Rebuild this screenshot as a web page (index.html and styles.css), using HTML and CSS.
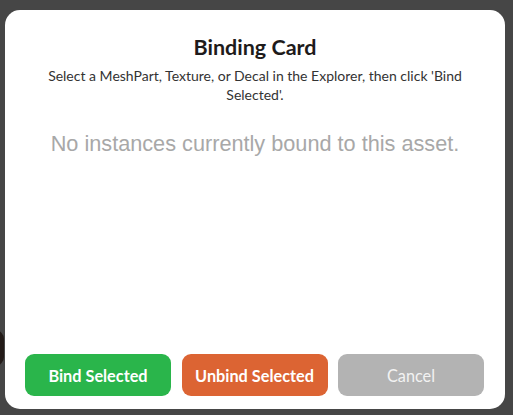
FILE: index.html
```html
<!DOCTYPE html>
<html>
<head>
<meta charset="utf-8">
<link rel="stylesheet" href="styles.css">
</head>
<body>
<div class="backdrop">
  <div class="behind"></div>
  <div class="card">
    <h1 class="title">Binding Card</h1>
    <p class="subtitle">Select a MeshPart, Texture, or Decal in the Explorer, then click 'Bind Selected'.</p>
    <p class="empty">No instances currently bound to this asset.</p>
    <div class="actions">
      <button class="btn btn-bind">Bind Selected</button>
      <button class="btn btn-unbind">Unbind Selected</button>
      <button class="btn btn-cancel">Cancel</button>
    </div>
  </div>
</div>
</body>
</html>
```
FILE: styles.css
```css
html, body {
  margin: 0;
  padding: 0;
  width: 513px;
  height: 415px;
  overflow: hidden;
  background: #464646;
}
.backdrop {
  position: relative;
  width: 513px;
  height: 415px;
  padding: 10px 8px 6px 5px;
  box-sizing: border-box;
}
.behind {
  position: absolute;
  left: -14px;
  top: 330px;
  width: 18px;
  height: 36px;
  border-radius: 9px;
  background: #231b18;
}
.card {
  position: relative;
  height: 399px;
  background: #ffffff;
  border-radius: 15px;
  display: flex;
  flex-direction: column;
  align-items: center;
  font-family: Lato, "Noto Sans", sans-serif;
}
.title {
  margin: 24px 0 0;
  font-size: 21.5px;
  font-weight: 700;
  color: #1e1b1b;
  line-height: 26px;
}
.subtitle {
  margin: 6px 0 0;
  padding: 0 38px;
  font-size: 14px;
  line-height: 19px;
  color: #333;
  text-align: center;
}
.empty {
  margin: 27px 0 0;
  font-family: "Liberation Sans", Arial, sans-serif;
  font-size: 21.7px;
  color: #a8a8a8;
  line-height: 26px;
}
.actions {
  margin-top: auto;
  margin-bottom: 13px;
  align-self: stretch;
  padding: 0 21px 0 20px;
  display: flex;
  gap: 10px;
  justify-content: space-between;
}
.btn {
  width: 146px;
  height: 42px;
  border: none;
  border-radius: 9px;
  font-family: Lato, "Noto Sans", sans-serif;
  font-size: 16.3px;
  font-weight: 700;
  color: #fff;
  padding: 0;
}
.btn-bind { background: #2ab54b; }
.btn-unbind { background: #dc6433; }
.btn-cancel { background: #b3b3b3; font-weight: 400; color: #f2f2f2; }
```
